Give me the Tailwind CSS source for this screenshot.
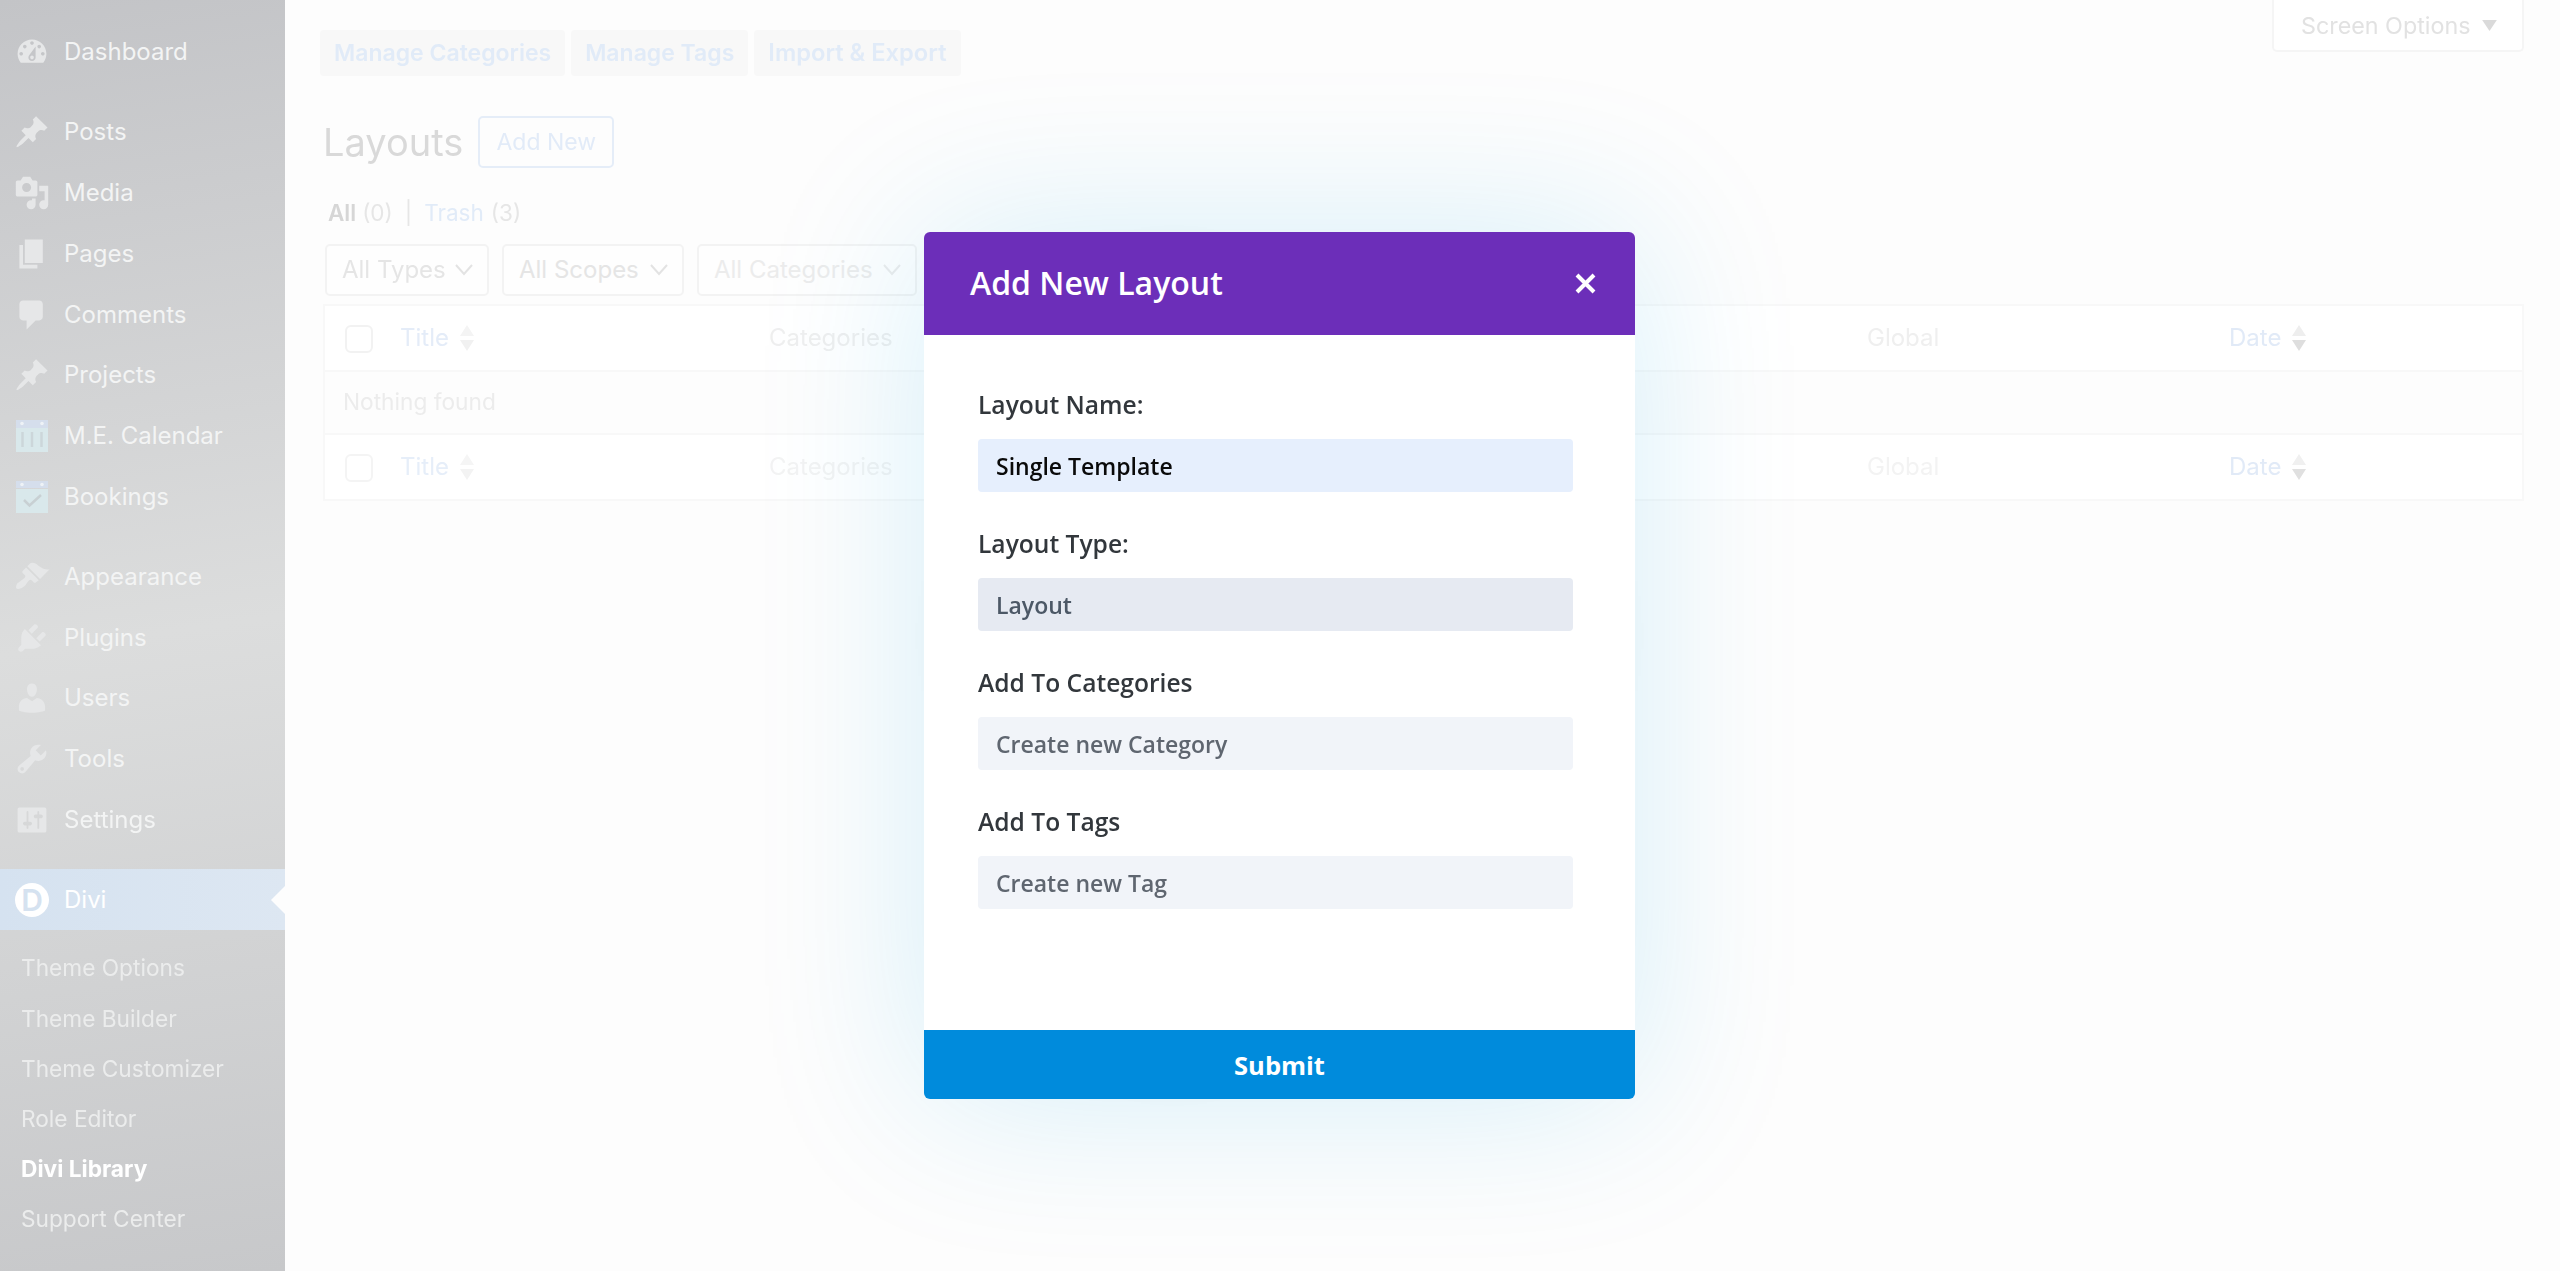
<!DOCTYPE html>
<html lang="en">
<head>
    <meta charset="UTF-8">
    <title>Layouts - Divi Library</title>
    <script src="https://cdn.jsdelivr.net/npm/@tailwindcss/browser@4"></script>
</head>
<body class="relative h-screen overflow-hidden bg-[#fdfdfd] font-['Inter',sans-serif]">
    <!-- Page behind the modal -->
    <div class="flex h-full blur-[0.6px]">
        <!-- Sidebar -->
        <aside class="w-[285px] shrink-0 bg-linear-[172deg] from-[#c3c4c7] via-[#dcdddd] to-[#c7c8ca] pt-[22px] text-[24px] text-[#f3f4f4]">
            <div class="flex h-[60.8px] items-center"><svg class="ml-[14px] h-[36px] w-[36px] fill-[#e6e7e8]" viewBox="0 0 20 20"><path fill-rule="evenodd" d="M3.76 16h12.48c1.1-1.37 1.76-3.11 1.76-5 0-4.42-3.58-8-8-8s-8 3.58-8 8c0 1.89.66 3.63 1.76 5zM10 4c.55 0 1 .45 1 1s-.45 1-1 1-1-.45-1-1 .45-1 1-1zM6 6c.55 0 1 .45 1 1s-.45 1-1 1-1-.45-1-1 .45-1 1-1zm8 0c.55 0 1 .45 1 1s-.45 1-1 1-1-.45-1-1 .45-1 1-1zm-5.37 5.55L12 7v6c0 1.1-.9 2-2 2s-2-.9-2-2c0-.57.24-1.08.63-1.45zM4 10c.55 0 1 .45 1 1s-.45 1-1 1-1-.45-1-1 .45-1 1-1zm12 0c.55 0 1 .45 1 1s-.45 1-1 1-1-.45-1-1 .45-1 1-1zm-5 3c0-.55-.45-1-1-1s-1 .45-1 1 .45 1 1 1 1-.45 1-1z"/></svg><span class="ml-[14px]">Dashboard</span></div>

            <div class="mt-[19px] flex h-[60.8px] items-center"><svg class="ml-[14px] h-[36px] w-[36px] fill-[#e6e7e8]" viewBox="0 0 20 20"><path d="M10.44 3.02l1.82-1.82 6.36 6.35-1.83 1.82c-1.05-.68-2.48-.57-3.41.36l-.75.75c-.92.93-1.04 2.35-.35 3.41l-1.83 1.82-2.41-2.41-2.8 2.79c-.42.42-3.38 2.71-3.8 2.29s1.86-3.39 2.28-3.81l2.79-2.79L4.1 9.36l1.83-1.82c1.05.69 2.48.57 3.4-.36l.75-.75c.93-.92 1.05-2.35.36-3.41z"/></svg><span class="ml-[14px]">Posts</span></div>
            <div class="flex h-[60.8px] items-center"><svg class="ml-[14px] h-[36px] w-[36px] fill-[#e6e7e8]" viewBox="0 0 20 20"><path fill-rule="evenodd" d="M13 11V4c0-.55-.45-1-1-1h-1.67L9 1H5L3.67 3H2c-.55 0-1 .45-1 1v7c0 .55.45 1 1 1h10c.55 0 1-.45 1-1zM7 4.5c1.38 0 2.5 1.12 2.5 2.5S8.38 9.5 7 9.5 4.5 8.38 4.5 7 5.62 4.5 7 4.5zM14 6h5v10.5c0 1.38-1.12 2.5-2.5 2.5S14 17.88 14 16.5s1.12-2.5 2.5-2.5c.17 0 .34.02.5.05V9h-3V6zm-4 8.05V13h2v3.5c0 1.38-1.12 2.5-2.5 2.5S7 17.88 7 16.5 8.12 14 9.5 14c.17 0 .34.02.5.05z"/></svg><span class="ml-[14px]">Media</span></div>
            <div class="flex h-[60.8px] items-center"><svg class="ml-[14px] h-[36px] w-[36px] fill-[#e6e7e8]" viewBox="0 0 20 20"><path d="M6 15V2h10v13H6zm-1 1h8v2H3V5h2v11z"/></svg><span class="ml-[14px]">Pages</span></div>
            <div class="flex h-[60.8px] items-center"><svg class="ml-[14px] h-[36px] w-[36px] fill-[#e6e7e8]" viewBox="0 0 20 20"><path d="M5 2h9c1.1 0 2 .9 2 2v7c0 1.1-.9 2-2 2h-2l-5 5v-5H5c-1.1 0-2-.9-2-2V4c0-1.1.9-2 2-2z"/></svg><span class="ml-[14px]">Comments</span></div>
            <div class="flex h-[60.8px] items-center"><svg class="ml-[14px] h-[36px] w-[36px] fill-[#e6e7e8]" viewBox="0 0 20 20"><path d="M10.44 3.02l1.82-1.82 6.36 6.35-1.83 1.82c-1.05-.68-2.48-.57-3.41.36l-.75.75c-.92.93-1.04 2.35-.35 3.41l-1.83 1.82-2.41-2.41-2.8 2.79c-.42.42-3.38 2.71-3.8 2.29s1.86-3.39 2.28-3.81l2.79-2.79L4.1 9.36l1.83-1.82c1.05.69 2.48.57 3.4-.36l.75-.75c.93-.92 1.05-2.35.36-3.41z"/></svg><span class="ml-[14px]">Projects</span></div>
            <div class="flex h-[60.8px] items-center"><svg class="ml-[16px] h-[32px] w-[32px]" viewBox="0 0 32 32"><rect y="8" width="32" height="24" fill="#d9e8eb"/><rect width="32" height="8" fill="#d5deec"/><circle cx="6" cy="3.5" r="1.8" fill="#eef2f6"/><circle cx="26" cy="3.5" r="1.8" fill="#eef2f6"/><path d="M6.5 12v15M16 12v15M25.5 12v15" stroke="#ccd6da" stroke-width="2.5"/></svg><span class="ml-[16px]">M.E. Calendar</span></div>
            <div class="flex h-[60.8px] items-center"><svg class="ml-[16px] h-[32px] w-[32px]" viewBox="0 0 32 32"><rect y="8" width="32" height="24" fill="#d9e8eb"/><rect width="32" height="7" fill="#d5deec"/><circle cx="6" cy="3.5" r="1.8" fill="#eef2f6"/><circle cx="26" cy="3.5" r="1.8" fill="#eef2f6"/><path d="M8 19l5.5 5.5L25 14" fill="none" stroke="#c8d0d3" stroke-width="2.5"/></svg><span class="ml-[16px]">Bookings</span></div>

            <div class="mt-[19px] flex h-[60.8px] items-center"><svg class="ml-[14px] h-[36px] w-[36px] fill-[#e6e7e8]" viewBox="0 0 20 20"><path d="M14.48 11.06L7.41 3.99l1.5-1.5c.5-.56 2.3-.47 3.51.32 1.21.8 1.43 1.28 2.91 2.1 1.18.64 2.45 1.26 4.45.85zm-.71.71L6.7 4.7 4.93 6.47c-.39.39-.39 1.02 0 1.41l1.06 1.06c.39.39.39 1.03 0 1.42-.6.6-1.43 1.11-2.21 1.69-.35.26-.7.53-1.01.84C1.43 13.23.78 15.82 1.37 16.41s3.18-.06 4.52-1.4c.31-.31.58-.66.84-1.01.58-.78 1.09-1.61 1.69-2.21.39-.39 1.02-.39 1.41 0l1.06 1.06c.39.39 1.02.39 1.41 0z"/></svg><span class="ml-[14px]">Appearance</span></div>
            <div class="flex h-[60.8px] items-center"><svg class="ml-[14px] h-[36px] w-[36px] fill-[#e6e7e8]" viewBox="0 0 20 20"><path d="M13.11 4.36L9.87 7.6 8 5.73l3.24-3.24c.35-.34 1.05-.2 1.56.32.52.51.66 1.21.31 1.55zm-8 1.77l.91-1.12 9.01 9.01-1.19.84c-.71.71-2.63 1.16-3.82 1.16H6.14L4.9 17.26c-.59.59-1.54.59-2.12 0-.59-.58-.59-1.53 0-2.12l1.24-1.24v-3.88c0-1.13.4-3.19 1.09-3.89zm7.26 3.97l3.24-3.24c.34-.35 1.04-.21 1.55.31.52.51.66 1.21.31 1.55l-3.24 3.25z"/></svg><span class="ml-[14px]">Plugins</span></div>
            <div class="flex h-[60.8px] items-center"><svg class="ml-[14px] h-[36px] w-[36px] fill-[#e6e7e8]" viewBox="0 0 20 20"><path d="M10 9.25c-2.27 0-2.73-3.44-2.73-3.44C7 4.02 7.82 2 9.97 2c2.16 0 2.98 2.02 2.71 3.81 0 0-.41 3.44-2.68 3.44zm0 2.57L12.72 10c2.39 0 4.52 2.33 4.52 4.53v2.49s-3.65 1.13-7.24 1.13c-3.65 0-7.24-1.13-7.24-1.13v-2.49c0-2.25 1.94-4.48 4.47-4.48z"/></svg><span class="ml-[14px]">Users</span></div>
            <div class="flex h-[60.8px] items-center"><svg class="ml-[14px] h-[36px] w-[36px] fill-[#e6e7e8]" viewBox="0 0 20 20"><path fill-rule="evenodd" d="M16.68 9.77c-1.34 1.34-3.3 1.67-4.95.99l-5.41 6.52c-.99.99-2.59.99-3.58 0s-.99-2.59 0-3.57l6.52-5.42c-.68-1.65-.35-3.61.99-4.95 1.28-1.28 3.12-1.62 4.72-1.06l-2.89 2.89 2.82 2.82 2.86-2.87c.53 1.58.18 3.39-1.08 4.65zM3.81 16.21c.4.39 1.04.39 1.43 0 .4-.4.4-1.04 0-1.43-.39-.4-1.03-.4-1.43 0-.39.39-.39 1.03 0 1.43z"/></svg><span class="ml-[14px]">Tools</span></div>
            <div class="flex h-[60.8px] items-center"><svg class="ml-[14px] h-[36px] w-[36px] fill-[#e6e7e8]" viewBox="0 0 20 20"><path fill-rule="evenodd" d="M18 16V4c0-.55-.45-1-1-1H3c-.55 0-1 .45-1 1v12c0 .55.45 1 1 1h14c.55 0 1-.45 1-1zM8 11h1c.55 0 1 .45 1 1s-.45 1-1 1H8v1.5c0 .28-.22.5-.5.5s-.5-.22-.5-.5V13H6c-.55 0-1-.45-1-1s.45-1 1-1h1V5.5c0-.28.22-.5.5-.5s.5.22.5.5V11zm5-2h-1c-.55 0-1-.45-1-1s.45-1 1-1h1V5.5c0-.28.22-.5.5-.5s.5.22.5.5V7h1c.55 0 1 .45 1 1s-.45 1-1 1h-1v5.5c0 .28-.22.5-.5.5s-.5-.22-.5-.5V9z"/></svg><span class="ml-[14px]">Settings</span></div>

            <!-- Divi menu -->
            <div class="relative mt-[19px] flex h-[61px] items-center bg-linear-to-r from-[#d5e2f0] to-[#dde7f2] text-white">
                <div class="ml-[15px] flex h-[34px] w-[34px] items-center justify-center rounded-full bg-white text-[30px] leading-none font-semibold text-[#d5e2f0]">D</div>
                <span class="ml-[15px]">Divi</span>
                <div class="absolute top-[17px] right-0 h-0 w-0 border-y-[14px] border-r-[14px] border-y-transparent border-r-[#fdfdfd]"></div>
            </div>
            <div class="pt-[13px] pl-[21px] text-[22.7px] text-[#ebecec]">
                <div class="flex h-[50.2px] items-center">Theme Options</div>
                <div class="flex h-[50.2px] items-center">Theme Builder</div>
                <div class="flex h-[50.2px] items-center">Theme Customizer</div>
                <div class="flex h-[50.2px] items-center">Role Editor</div>
                <div class="flex h-[50.2px] items-center font-bold text-white">Divi Library</div>
                <div class="flex h-[50.2px] items-center">Support Center</div>
            </div>
        </aside>

        <!-- Main content -->
        <main class="min-w-0 flex-1 pr-[36px] pl-[38px]">
            <div class="flex items-start justify-between">
                <div class="mt-[30px] -ml-[3px] flex gap-[6px] text-[23px] font-semibold text-[#e1ebf8]">
                    <div class="flex h-[46px] items-center rounded-[4px] bg-[#f8f8f8] px-[14px]">Manage Categories</div>
                    <div class="flex h-[46px] items-center rounded-[4px] bg-[#f8f8f8] px-[14px]">Manage Tags</div>
                    <div class="flex h-[46px] items-center rounded-[4px] bg-[#f8f8f8] px-[14px] text-[23.7px]">Import &amp; Export</div>
                </div>
                <div class="flex h-[52px] w-[252px] items-center gap-[11px] rounded-b-[5px] border-x-2 border-b-2 border-[#f5f5f5] bg-white pt-[3px] pl-[27px] text-[23.3px] text-[#e2e2e2]">
                    <span>Screen Options</span>
                    <svg class="mb-[2px] h-[11px] w-[15px] fill-[#dadada]" viewBox="0 0 16 12"><path d="M0 0h16L8 12z"/></svg>
                </div>
            </div>

            <div class="mt-[40px] flex items-center">
                <h1 class="text-[38px] leading-[52px] text-[#d9d9d9]">Layouts</h1>
                <div class="ml-[15px] flex h-[52px] w-[136px] items-center justify-center rounded-[5px] border-2 border-[#e5edf8] text-[23px] text-[#e2ebf8]">Add New</div>
            </div>

            <div class="mt-[31px] ml-[5px] flex h-[28px] items-center text-[22.5px] text-[#e6e6e6]">
                <span class="font-semibold text-[#d6d6d6]">All</span><span class="ml-[6px]">(0)</span><span class="mx-[12px]">|</span><span class="text-[#e1ebf8]">Trash</span><span class="ml-[7px]">(3)</span>
            </div>

            <div class="mt-[17px] ml-[2px] flex gap-[13px] text-[24px] text-[#e5e5e5]">
                <div class="flex h-[52px] w-[164px] items-center justify-between rounded-[5px] border-2 border-[#f3f3f3] bg-[#fefefe] pr-[13px] pl-[15px]"><span>All Types</span><svg class="h-[12px] w-[20px] fill-none stroke-[#e3e3e3] stroke-2" viewBox="0 0 20 12"><path d="M2 1l8 9 8-9"/></svg></div>
                <div class="flex h-[52px] w-[182px] items-center justify-between rounded-[5px] border-2 border-[#f3f3f3] bg-[#fefefe] pr-[13px] pl-[15px]"><span>All Scopes</span><svg class="h-[12px] w-[20px] fill-none stroke-[#e3e3e3] stroke-2" viewBox="0 0 20 12"><path d="M2 1l8 9 8-9"/></svg></div>
                <div class="flex h-[52px] w-[220px] items-center justify-between rounded-[5px] border-2 border-[#f3f3f3] bg-[#fefefe] pr-[13px] pl-[15px] text-[#ececec]"><span>All Categories</span><svg class="h-[12px] w-[20px] fill-none stroke-[#ececec] stroke-2" viewBox="0 0 20 12"><path d="M2 1l8 9 8-9"/></svg></div>
            </div>

            <!-- Table -->
            <div class="mt-[8px] border-2 border-[#f8f8f8] text-[24px]">
                <div class="grid h-[64px] grid-cols-[75px_369px_1098px_362px_1fr] items-center bg-white text-[#efefef]">
                    <div class="mt-[2px] ml-[20px] h-[28px] w-[28px] rounded-[6px] border-2 border-[#f2f2f2]"></div>
                    <div class="flex items-center gap-[10px] text-[#e4ecf8]"><span>Title</span><svg class="h-[26px] w-[16px]" viewBox="0 0 16 26"><path d="M8 0l7 11H1z" fill="#f4f4f4"/><path d="M8 26l7-11H1z" fill="#f1f1f1"/></svg></div>
                    <div>Categories</div>
                    <div>Global</div>
                    <div class="flex items-center gap-[10px] text-[#e1eaf7]"><span>Date</span><svg class="h-[26px] w-[16px]" viewBox="0 0 16 26"><path d="M8 0l7 11H1z" fill="#eeeeee"/><path d="M8 26l7-11H1z" fill="#dedede"/></svg></div>
                </div>
                <div class="flex h-[65px] items-center border-y-2 border-[#f8f8f8] bg-[#fdfdfd] pl-[18px] text-[22.7px] text-[#ececec]">Nothing found</div>
                <div class="grid h-[64px] grid-cols-[75px_369px_1098px_362px_1fr] items-center bg-white text-[#f3f3f3]">
                    <div class="mt-[2px] ml-[20px] h-[28px] w-[28px] rounded-[6px] border-2 border-[#f4f4f4]"></div>
                    <div class="flex items-center gap-[10px] text-[#e6eef9]"><span>Title</span><svg class="h-[26px] w-[16px]" viewBox="0 0 16 26"><path d="M8 0l7 11H1z" fill="#f5f5f5"/><path d="M8 26l7-11H1z" fill="#f3f3f3"/></svg></div>
                    <div>Categories</div>
                    <div>Global</div>
                    <div class="flex items-center gap-[10px] text-[#e1eaf7]"><span>Date</span><svg class="h-[26px] w-[16px]" viewBox="0 0 16 26"><path d="M8 0l7 11H1z" fill="#f0f0f0"/><path d="M8 26l7-11H1z" fill="#e0e0e0"/></svg></div>
                </div>
            </div>
        </main>
    </div>

    <!-- Add New Layout modal -->
    <div class="absolute top-[232px] left-[924px] flex h-[867px] w-[711px] flex-col rounded-[6px] bg-white font-['Open_Sans',sans-serif] shadow-[0_0_170px_rgba(0,160,225,0.16),0_0_600px_rgba(0,160,225,0.025)]">
        <div class="flex h-[103px] items-center justify-between rounded-t-[6px] bg-[#6c2eb9] pr-[39px] pb-[1px] pl-[46px] text-white">
            <h2 class="text-[32px] font-semibold">Add New Layout</h2>
            <svg class="h-[21px] w-[21px] fill-none stroke-white stroke-[4]" viewBox="0 0 21 21"><path d="M2 2l17 17M19 2L2 19"/></svg>
        </div>
        <div class="flex flex-1 flex-col gap-[35px] pt-[53px] pr-[62px] pl-[54px] text-[23px] font-semibold">
            <div>
                <label class="block text-[24.6px] leading-[34px] text-[#32373c]">Layout Name:</label>
                <input class="mt-[17px] block h-[53px] w-full rounded-[4px] bg-[#e6effd] px-[18px] text-[#0a0a0a] outline-none" value="Single Template">
            </div>
            <div>
                <label class="block text-[24.6px] leading-[34px] text-[#32373c]">Layout Type:</label>
                <input class="mt-[17px] block h-[53px] w-full rounded-[4px] bg-[#e6eaf2] px-[18px] text-[#4c5866] outline-none" value="Layout" disabled>
            </div>
            <div>
                <label class="block text-[24.6px] leading-[34px] text-[#32373c]">Add To Categories</label>
                <input class="mt-[17px] block h-[53px] w-full rounded-[4px] bg-[#f1f4f9] px-[18px] outline-none placeholder:text-[#5f6670]" placeholder="Create new Category">
            </div>
            <div>
                <label class="block text-[24.6px] leading-[34px] text-[#32373c]">Add To Tags</label>
                <input class="mt-[17px] block h-[53px] w-full rounded-[4px] bg-[#f1f4f9] px-[18px] outline-none placeholder:text-[#5f6670]" placeholder="Create new Tag">
            </div>
        </div>
        <button class="h-[69px] rounded-b-[6px] bg-[#008bdc] pt-[1px] text-[25.5px] font-bold text-white">Submit</button>
    </div>
</body>
</html>
